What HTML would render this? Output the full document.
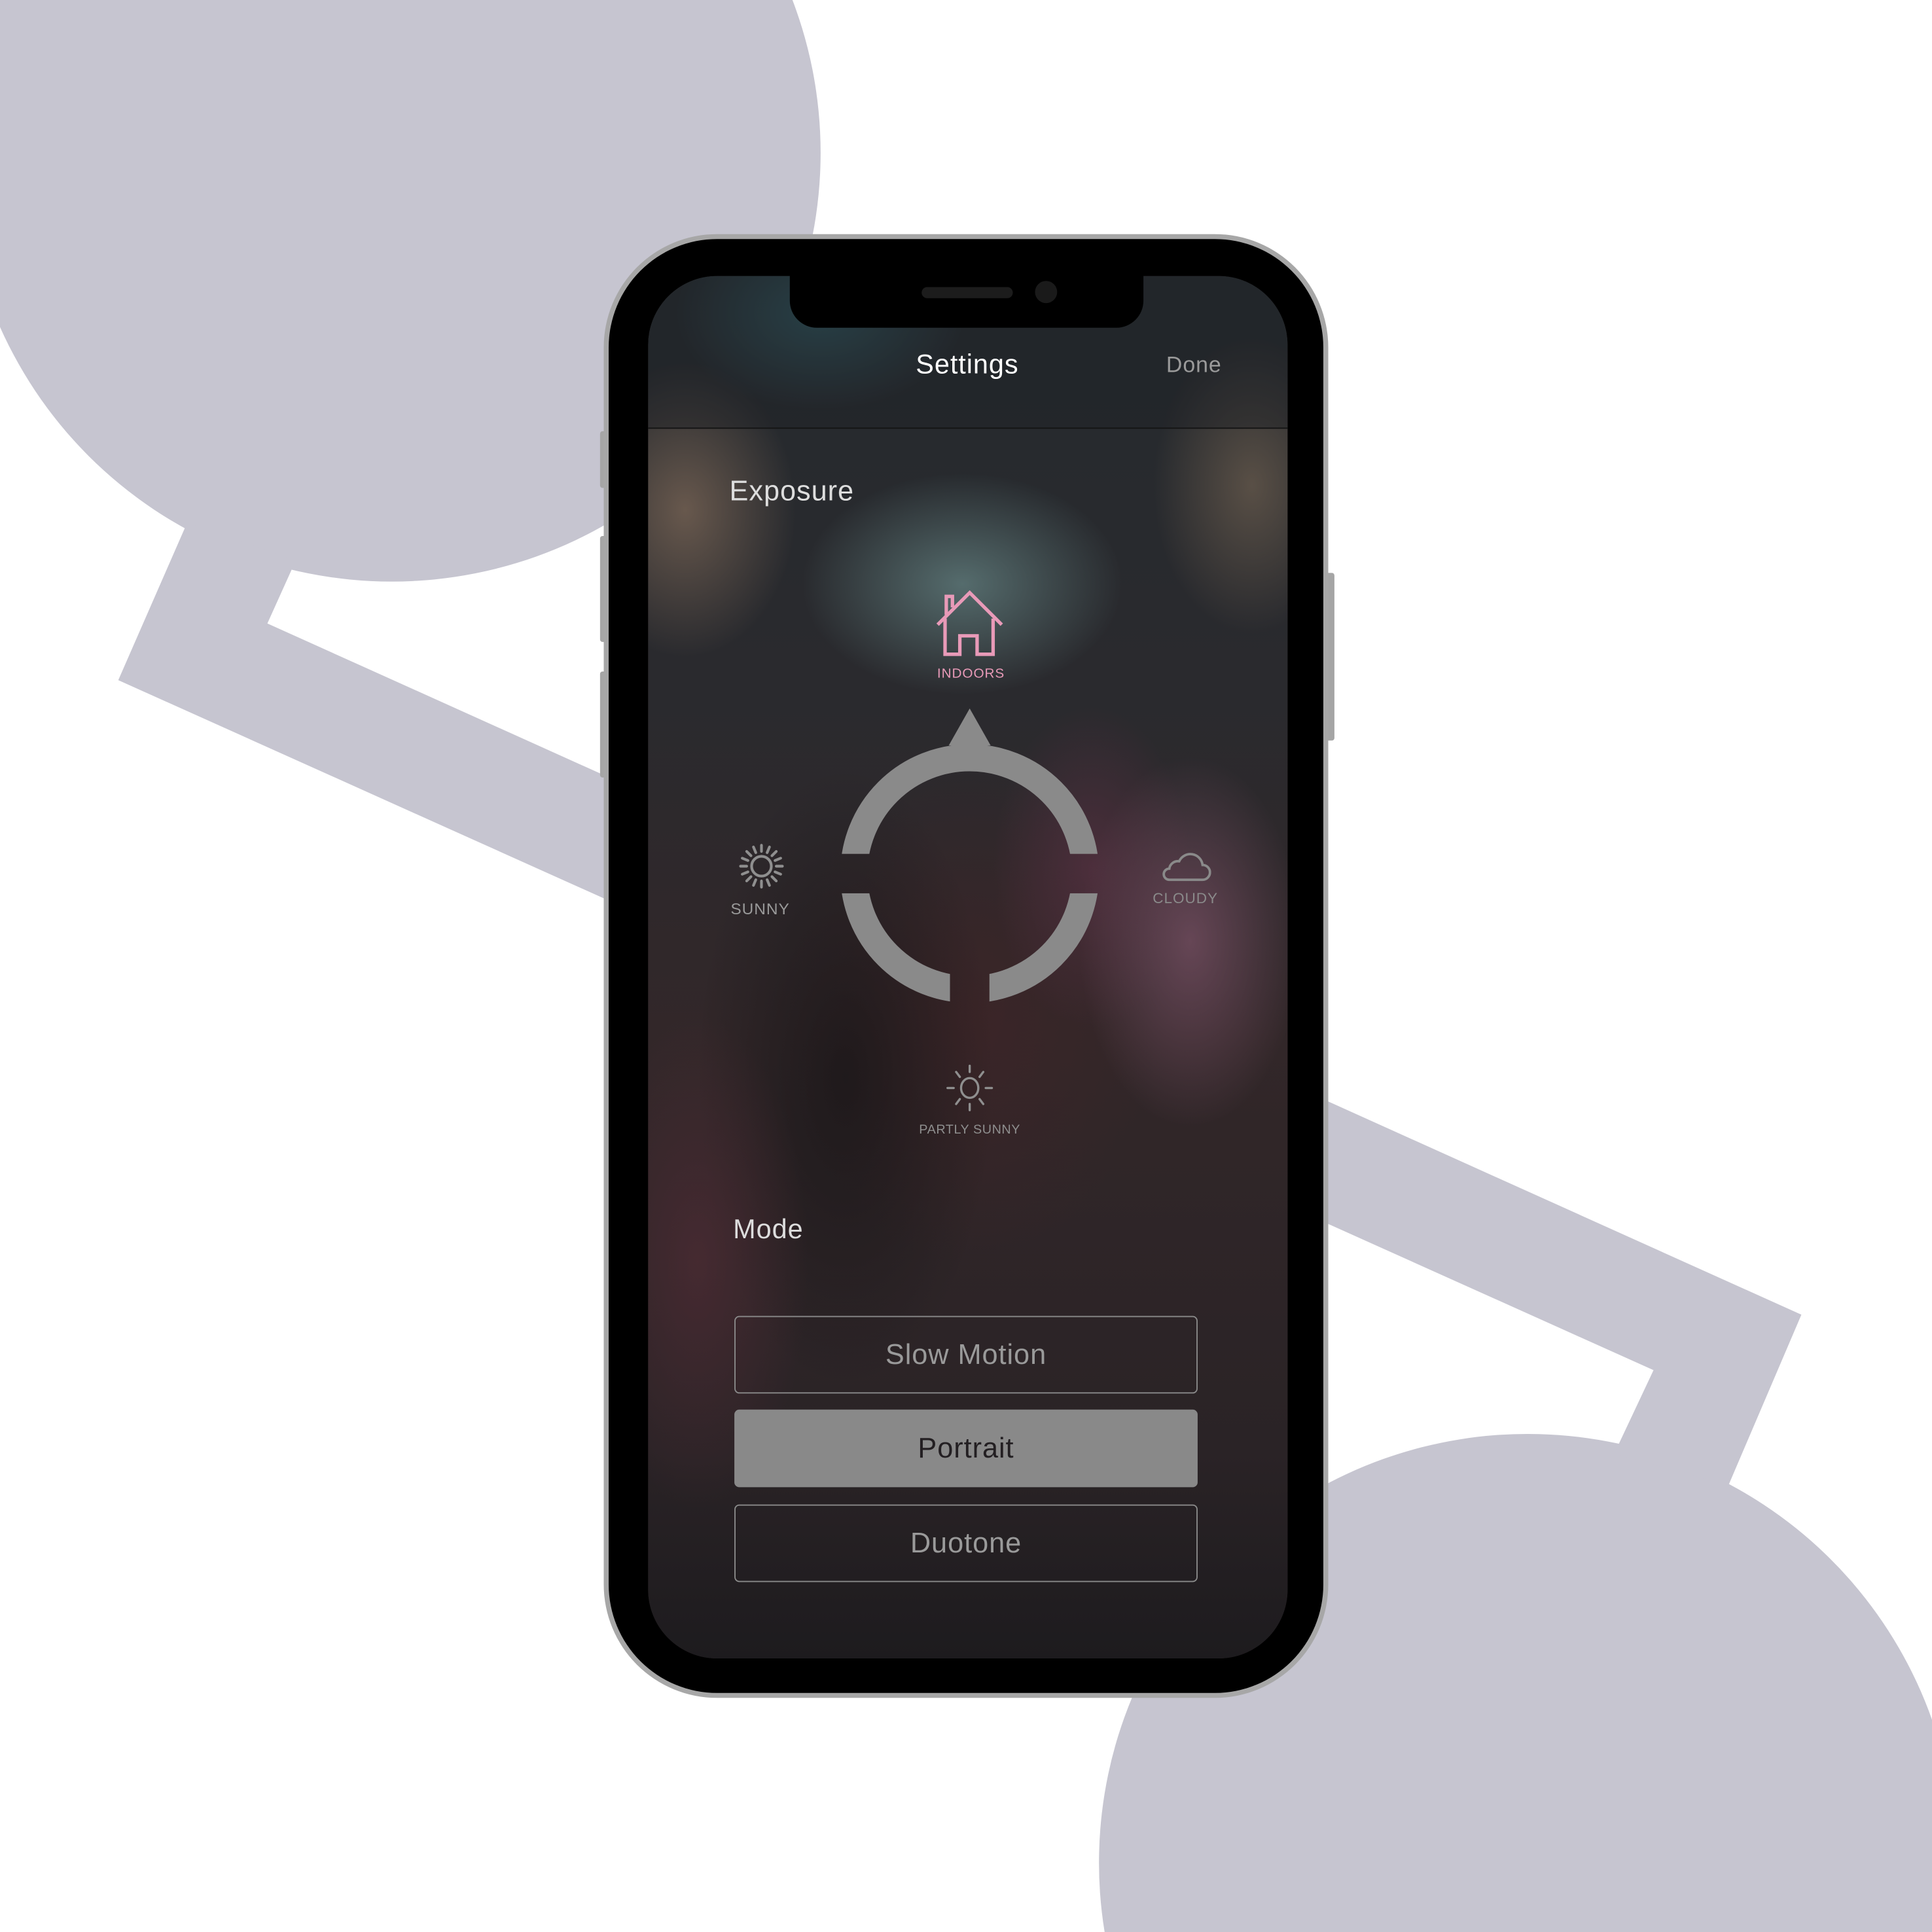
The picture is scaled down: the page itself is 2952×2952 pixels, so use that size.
<!DOCTYPE html>
<html><head><meta charset="utf-8"><style>
html,body{margin:0;padding:0;background:#fff;overflow:hidden;width:2952px;height:2952px}
#w{position:absolute;left:0;top:0;width:1568px;height:1568px;overflow:hidden;transform:scale(1.882653);transform-origin:0 0;font-family:"Liberation Sans","DejaVu Sans",sans-serif}
.a{position:absolute}
.t{position:absolute;white-space:nowrap;transform:translateX(-50%)}
.btn{position:absolute;left:596px;width:376px;height:63px;box-sizing:border-box;border:1.5px solid #8a8a8a;border-radius:4px;color:#9a9a9a;font-size:23px;letter-spacing:.5px;text-align:center;line-height:60px}
</style></head><body><div id="w">
<svg class="a" style="left:0;top:0" width="1568" height="1568">
<g fill="#c6c5d0">
<circle cx="318" cy="124" r="348"/>
<path d="M896.5,1568 A348,348 0 0 1 1568,1395.7 L1568,1568 Z"/>
<polygon points="152,424 96,552 1342,1112 1310,1180 1403,1205 1462,1067 217,506 240,455"/>
</g>
</svg>
<div class="a" style="left:487px;top:350px;width:8px;height:46px;background:#a5a5a5;border-radius:2px"></div>
<div class="a" style="left:487px;top:435px;width:8px;height:86px;background:#a5a5a5;border-radius:2px"></div>
<div class="a" style="left:487px;top:545px;width:8px;height:86px;background:#a5a5a5;border-radius:2px"></div>
<div class="a" style="left:1074px;top:465px;width:9px;height:136px;background:#a5a5a5;border-radius:2px"></div>
<div class="a" style="left:490px;top:190px;width:588px;height:1188px;background:#a7a7a7;border-radius:92px"></div>
<div class="a" style="left:494px;top:194px;width:580px;height:1180px;background:#000;border-radius:88px"></div>
<div class="a" style="left:526px;top:224px;width:519px;height:1122px;border-radius:56px;overflow:hidden;background:#2c2426">
 <div class="a" style="left:0;top:0;width:519px;height:1122px;background:
 radial-gradient(ellipse 130px 90px at 255px 250px,rgba(100,130,130,.75),transparent),
 radial-gradient(ellipse 120px 80px at 140px 30px,rgba(50,100,110,.8),transparent),
 radial-gradient(ellipse 90px 120px at 30px 190px,rgba(120,100,85,.8),transparent),
 radial-gradient(ellipse 80px 120px at 490px 170px,rgba(110,95,80,.7),transparent),
 radial-gradient(ellipse 90px 150px at 440px 540px,rgba(120,80,100,.75),transparent),
 radial-gradient(ellipse 80px 130px at 360px 480px,rgba(95,50,70,.6),transparent),
 radial-gradient(ellipse 90px 200px at 40px 800px,rgba(85,45,55,.6),transparent),
 radial-gradient(ellipse 120px 250px at 160px 650px,rgba(22,20,22,.7),transparent),
 radial-gradient(ellipse 150px 200px at 260px 600px,rgba(65,35,38,.6),transparent),
 linear-gradient(180deg,#252a2e 0%,#2a2a2e 30%,#322729 55%,#2a2326 85%,#1d1b1e 100%)"></div>
 <div class="a" style="left:0;top:0;width:519px;height:123px;background:rgba(30,34,38,.45);border-bottom:1.5px solid #151515"></div>
 <div class="t" style="left:259px;top:59px;color:#fff;font-size:22px;letter-spacing:.5px">Settings</div>
 <div class="t" style="left:443px;top:62px;color:#9a9a9a;font-size:18px;letter-spacing:.5px">Done</div>
 <div class="a" style="left:66px;top:161px;color:#ddd;font-size:23px;letter-spacing:.5px">Exposure</div>
 <svg class="a" style="left:230px;top:252px" width="60" height="60" viewBox="0 0 60 60">
  <path d="M5,31 L31,5 L57,31 M11,26 V55 H23 V40 H37 V55 H50 V26 M12,23 V8 H17 V17" fill="none" stroke="#e89ab8" stroke-width="2.8"/>
 </svg>
 <div class="t" style="left:262px;top:317px;color:#e89ab8;font-size:11px;letter-spacing:.5px">INDOORS</div>
 <svg class="a" style="left:150px;top:350px" width="220" height="245" viewBox="0 0 220 245">
  <defs><mask id="m"><rect width="220" height="245" fill="#fff"/><rect x="0" y="119" width="220" height="32" fill="#000"/><rect x="95" y="180" width="32" height="70" fill="#000"/></mask></defs>
  <circle cx="111" cy="135" r="94" fill="none" stroke="#8a8a8a" stroke-width="22" mask="url(#m)"/>
  <polygon points="111,1 94,31 128,31" fill="#8a8a8a"/>
 </svg>
 <svg class="a" style="left:72px;top:459px" width="40" height="40" viewBox="-20 -20 40 40" stroke="#8f8f8f" stroke-width="2.2" fill="none">
  <circle r="8"/><g stroke-linecap="round"><path d="M0,-12V-17M0,12V17M-12,0H-17M12,0H17M8.5,-8.5L12,-12M-8.5,8.5L-12,12M8.5,8.5L12,12M-8.5,-8.5L-12,-12M4.6,-11L6.5,-15.6M-4.6,11L-6.5,15.6M11,4.6L15.6,6.5M-11,-4.6L-15.6,-6.5M4.6,11L6.5,15.6M-4.6,-11L-6.5,-15.6M11,-4.6L15.6,-6.5M-11,4.6L-15.6,6.5"/></g>
 </svg>
 <div class="t" style="left:91px;top:506px;color:#999;font-size:13px;letter-spacing:.5px">SUNNY</div>
 <svg class="a" style="left:417px;top:465px" width="40" height="30" viewBox="0 0 40 30">
  <path d="M6,25 H33 a6,6 0 0 0 0,-12 a10,10 0 0 0 -19,-3 a7,7 0 0 0 -8,6 a4.5,4.5 0 0 0 0,9z" fill="none" stroke="#8a8a8a" stroke-width="2"/>
 </svg>
 <div class="t" style="left:436px;top:498px;color:#8a8a8a;font-size:12px;letter-spacing:.5px">CLOUDY</div>
 <svg class="a" style="left:241px;top:639px" width="40" height="40" viewBox="-20 -20 40 40" stroke="#8f8f8f" stroke-width="1.8" fill="none" stroke-linecap="round">
  <ellipse rx="7" ry="8"/><path d="M0,-13V-18M0,13V18M-13,0H-18M13,0H18M8,-9L11,-13M-8,9L-11,13M8,9L11,13M-8,-9L-11,-13"/>
 </svg>
 <div class="t" style="left:261px;top:687px;color:#8f8f8f;font-size:10.5px;letter-spacing:.3px">PARTLY SUNNY</div>
 <div class="a" style="left:69px;top:761px;color:#ddd;font-size:22px;letter-spacing:.5px">Mode</div>
</div>
<div class="btn" style="top:1068px">Slow Motion</div>
<div class="btn" style="top:1144px;background:#898989;border-color:#898989;color:#231f22">Portrait</div>
<div class="btn" style="top:1221px">Duotone</div>
<div class="a" style="left:641px;top:220px;width:287px;height:46px;background:#000;border-radius:0 0 22px 22px"></div>
<div class="a" style="left:748px;top:233px;width:74px;height:9px;background:#1c1c1c;border-radius:5px"></div>
<div class="a" style="left:840px;top:228px;width:18px;height:18px;background:#1a1a1a;border-radius:50%"></div>
</div></body></html>
